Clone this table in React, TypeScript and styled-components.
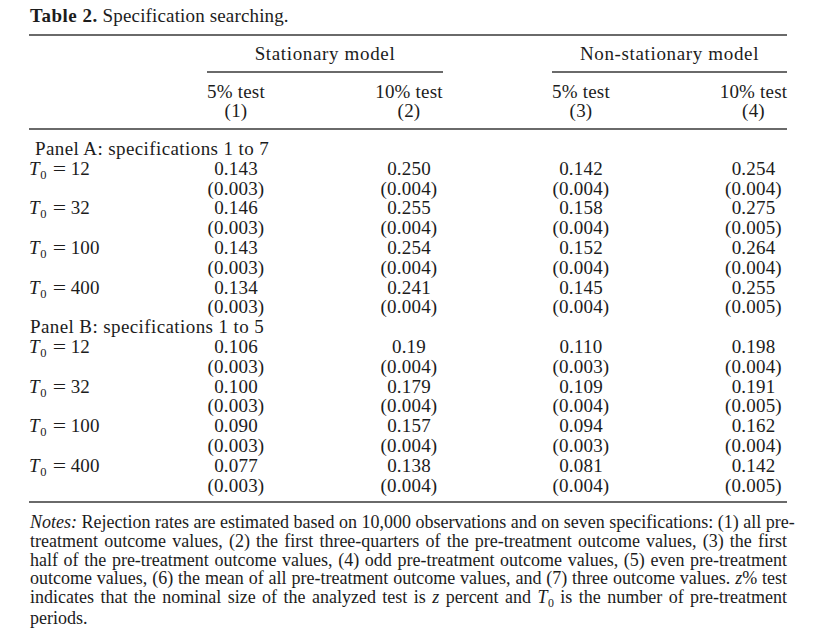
import React from "react";
import styled, { createGlobalStyle } from "styled-components";

const Global = createGlobalStyle`
  html, body { margin: 0; padding: 0; background: #ffffff; }
  body { font-family: "Liberation Serif", "Times New Roman", serif; color: #1c1c1c; }
`;

const COLS = "178px 58px 110px 68px 109px 58px 110px 67px";
const LINE = 19.8;

const Page = styled.div`
  width: 828px;
  height: 640px;
  padding: 4px 0 0 29px;
  box-sizing: border-box;
  font-size: 19px;
`;

const Table = styled.div`
  width: 758px;
`;

const Title = styled.div`
  height: 30px;
  line-height: 24px;
  padding-left: 1px;
  font-size: 19px;
  letter-spacing: 0.15px;
`;

const Bold = styled.span`
  font-weight: bold;
  letter-spacing: 0.5px;
`;

const Rule = styled.div`
  height: 2px;
  background: #6a6a6a;
`;

const Row = styled.div`
  display: grid;
  grid-template-columns: ${COLS};
  height: ${LINE}px;
  line-height: ${LINE}px;
  white-space: nowrap;
  letter-spacing: 0.2px;
`;

const SpannerRow = styled.div`
  display: grid;
  grid-template-columns: ${COLS};
  white-space: nowrap;
`;

const Spanner = styled.div<{ $col: string }>`
  grid-column: ${(p) => p.$col};
  display: flex;
  justify-content: center;
  padding: 8px 0 7px;
  line-height: 20px;
  border-bottom: 2px solid #6a6a6a;
  letter-spacing: 0.65px;
`;

const HeadRow = styled.div`
  display: grid;
  grid-template-columns: ${COLS};
  padding: 9px 0 8px;
  white-space: nowrap;
  letter-spacing: 0.2px;
`;

const HeadCell = styled.div<{ $col: number }>`
  grid-column: ${(p) => p.$col};
  display: flex;
  flex-direction: column;
  align-items: center;
  line-height: 19px;
`;

const Cell = styled.div<{ $col: number }>`
  grid-column: ${(p) => p.$col};
  display: flex;
  justify-content: center;
`;

const Label = styled.div<{ $indent: number; $wide?: boolean }>`
  grid-column: ${(p) => (p.$wide ? "1 / 6" : "1 / 2")};
  padding-left: ${(p) => p.$indent}px;
`;

const PanelTitle = styled.span`
  letter-spacing: 0.4px;
`;

const Body = styled.div`
  padding: 9px 0 6px;
`;

const It = styled.i`
  font-style: italic;
`;

const Sub = styled.span`
  font-size: 0.66em;
  position: relative;
  top: 0.32em;
  margin-left: 0.5px;
  font-style: normal;
`;

const Eq = styled.span`
  display: inline-block;
  margin: 0 6px 0 7px;
  transform: scaleX(1.25);
`;

const Notes = styled.div`
  width: 758px;
  padding-top: 10px;
  font-size: 18px;
  line-height: 18.7px;
`;

const NoteLine = styled.div<{ $last?: boolean }>`
  text-align: justify;
  text-align-last: ${(p) => (p.$last ? "left" : "justify")};
  white-space: nowrap;
  padding-left: 1px;
`;

const T0 = ({ n }: { n: number }) => (
  <>
    <It>T</It>
    <Sub>0</Sub>
    <Eq>=</Eq>
    {n}
  </>
);

type Block = { n: number; vals: string[]; ses: string[] };

const panelA: Block[] = [
  { n: 12, vals: ["0.143", "0.250", "0.142", "0.254"], ses: ["(0.003)", "(0.004)", "(0.004)", "(0.004)"] },
  { n: 32, vals: ["0.146", "0.255", "0.158", "0.275"], ses: ["(0.003)", "(0.004)", "(0.004)", "(0.005)"] },
  { n: 100, vals: ["0.143", "0.254", "0.152", "0.264"], ses: ["(0.003)", "(0.004)", "(0.004)", "(0.004)"] },
  { n: 400, vals: ["0.134", "0.241", "0.145", "0.255"], ses: ["(0.003)", "(0.004)", "(0.004)", "(0.005)"] },
];

const panelB: Block[] = [
  { n: 12, vals: ["0.106", "0.19", "0.110", "0.198"], ses: ["(0.003)", "(0.004)", "(0.003)", "(0.004)"] },
  { n: 32, vals: ["0.100", "0.179", "0.109", "0.191"], ses: ["(0.003)", "(0.004)", "(0.004)", "(0.005)"] },
  { n: 100, vals: ["0.090", "0.157", "0.094", "0.162"], ses: ["(0.003)", "(0.004)", "(0.003)", "(0.004)"] },
  { n: 400, vals: ["0.077", "0.138", "0.081", "0.142"], ses: ["(0.003)", "(0.004)", "(0.004)", "(0.005)"] },
];

const DATA_COLS = [2, 4, 6, 8];

const Panel = ({ title, indent, blocks }: { title: string; indent: number; blocks: Block[] }) => (
  <>
    <Row>
      <Label $indent={indent} $wide>
        <PanelTitle>{title}</PanelTitle>
      </Label>
    </Row>
    {blocks.map((b) => (
      <React.Fragment key={title + b.n}>
        <Row>
          <Label $indent={0}>
            <T0 n={b.n} />
          </Label>
          {b.vals.map((v, i) => (
            <Cell key={i} $col={DATA_COLS[i]}>{v}</Cell>
          ))}
        </Row>
        <Row>
          {b.ses.map((v, i) => (
            <Cell key={i} $col={DATA_COLS[i]}>{v}</Cell>
          ))}
        </Row>
      </React.Fragment>
    ))}
  </>
);

export default function App() {
  return (
    <Page>
      <Global />
      <Table>
        <Title>
          <Bold>Table 2.</Bold> Specification searching.
        </Title>
        <Rule />
        <SpannerRow>
          <Spanner $col="2 / 5">Stationary model</Spanner>
          <Spanner $col="6 / 9">Non-stationary model</Spanner>
        </SpannerRow>
        <HeadRow>
          <HeadCell $col={2}>
            <span>5% test</span>
            <span>(1)</span>
          </HeadCell>
          <HeadCell $col={4}>
            <span>10% test</span>
            <span>(2)</span>
          </HeadCell>
          <HeadCell $col={6}>
            <span>5% test</span>
            <span>(3)</span>
          </HeadCell>
          <HeadCell $col={8}>
            <span>10% test</span>
            <span>(4)</span>
          </HeadCell>
        </HeadRow>
        <Rule />
        <Body>
          <Panel title="Panel A: specifications 1 to 7" indent={6} blocks={panelA} />
          <Panel title="Panel B: specifications 1 to 5" indent={1} blocks={panelB} />
        </Body>
        <Rule />
      </Table>
      <Notes>
        <NoteLine>
          <It>Notes:</It> Rejection rates are estimated based on 10,000 observations and on seven specifications: (1) all pre-
        </NoteLine>
        <NoteLine>
          treatment outcome values, (2) the first three-quarters of the pre-treatment outcome values, (3) the first
        </NoteLine>
        <NoteLine>
          half of the pre-treatment outcome values, (4) odd pre-treatment outcome values, (5) even pre-treatment
        </NoteLine>
        <NoteLine>
          outcome values, (6) the mean of all pre-treatment outcome values, and (7) three outcome values. <It>z</It>% test
        </NoteLine>
        <NoteLine>
          indicates that the nominal size of the analyzed test is <It>z</It> percent and <It>T</It>
          <Sub>0</Sub> is the number of pre-treatment
        </NoteLine>
        <NoteLine $last>periods.</NoteLine>
      </Notes>
    </Page>
  );
}
